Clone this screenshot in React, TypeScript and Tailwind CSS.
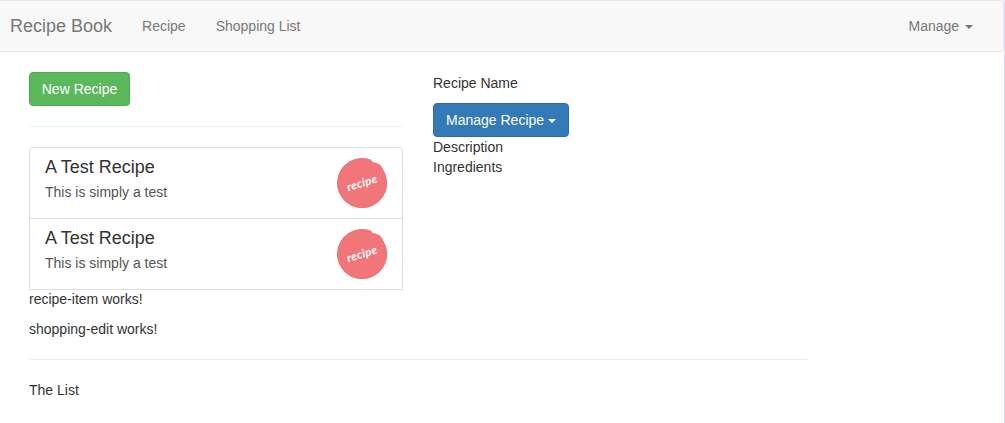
function Caret({ className = '' }: { className?: string }) {
  return (
    <span
      className={`inline-block h-0 w-0 border-x-4 border-t-4 border-x-transparent border-t-current align-middle ${className}`}
    />
  );
}

function RecipeLogo() {
  return (
    <svg viewBox="0 0 50 50" className="h-[50px] w-[50px] shrink-0" role="img" aria-label="recipe">
      <path
        d="M34 1.7A25 25 0 1 0 46.2 11.7C45.7 9.7 44.5 8.2 43.2 7.2Q42.6 5.6 41 5.9Q39.4 4.2 37.4 4.6Q35.2 4.2 34 1.7Z"
        fill="#f1767a"
      />
      <path
        d="M34 2.3A24.5 24.5 0 1 0 45.8 12"
        fill="none"
        stroke="#e2777b"
        strokeWidth="0.8"
      />
      <text
        x="25"
        y="28.8"
        textAnchor="middle"
        textLength="31"
        lengthAdjust="spacing"
        transform="rotate(-17 25 25)"
        fill="#fff"
        className="font-['Lato',sans-serif] text-[11.5px] font-bold italic"
      >
        recipe
      </text>
    </svg>
  );
}

const recipes = [
  { id: 1, name: 'A Test Recipe', description: 'This is simply a test' },
  { id: 2, name: 'A Test Recipe', description: 'This is simply a test' },
];

function Navbar() {
  return (
    <nav className="flex h-[52px] items-center rounded-r border-y border-r border-[#e7e7e7] bg-[#f8f8f8] pr-[30px] pl-2.5 text-[#777]">
      <a href="#" className="text-lg leading-5">Recipe Book</a>
      <div className="ml-[30px] flex flex-1 gap-[30px]">
        <a href="#">Recipe</a>
        <a href="#">Shopping List</a>
      </div>
      <a href="#">
        Manage <Caret className="ml-0.5" />
      </a>
    </nav>
  );
}

export default function App() {
  return (
    <div className="h-[423px] overflow-hidden border-r border-[#d5dff5] bg-white font-['Liberation_Sans',Arial,sans-serif] text-sm leading-5 text-[#333]">
      <Navbar />
      <main className="ml-[29px] w-[778px] pt-5">
        <div className="flex gap-[30px]">
          <section className="w-[374px]">
            <button className="block h-[34px] w-[101px] rounded border border-[#4cae4c] bg-[#5cb85c] text-white">
              New Recipe
            </button>
            <hr className="my-5 border-[#eee]" />
            <div>
              {recipes.map((recipe) => (
                <a
                  key={recipe.id}
                  href="#"
                  className="-mb-px flex justify-between border border-[#ddd] px-[15px] py-2.5 first:rounded-t"
                >
                  <div>
                    <h4 className="mb-[5px] text-lg leading-[19px]">{recipe.name}</h4>
                    <p className="text-[#555]">{recipe.description}</p>
                  </div>
                  <RecipeLogo />
                </a>
              ))}
            </div>
            <p>recipe-item works!</p>
          </section>
          <section className="pt-px">
            <p className="mb-2.5">Recipe Name</p>
            <button className="block h-[34px] w-[136px] rounded border border-[#2e6da4] bg-[#337ab7] text-white">
              Manage Recipe <Caret />
            </button>
            <p>Description</p>
            <p>Ingredients</p>
          </section>
        </div>
        <p className="mt-2.5">shopping-edit works!</p>
        <hr className="my-5 border-[#eee]" />
        <p>The List</p>
      </main>
    </div>
  );
}
